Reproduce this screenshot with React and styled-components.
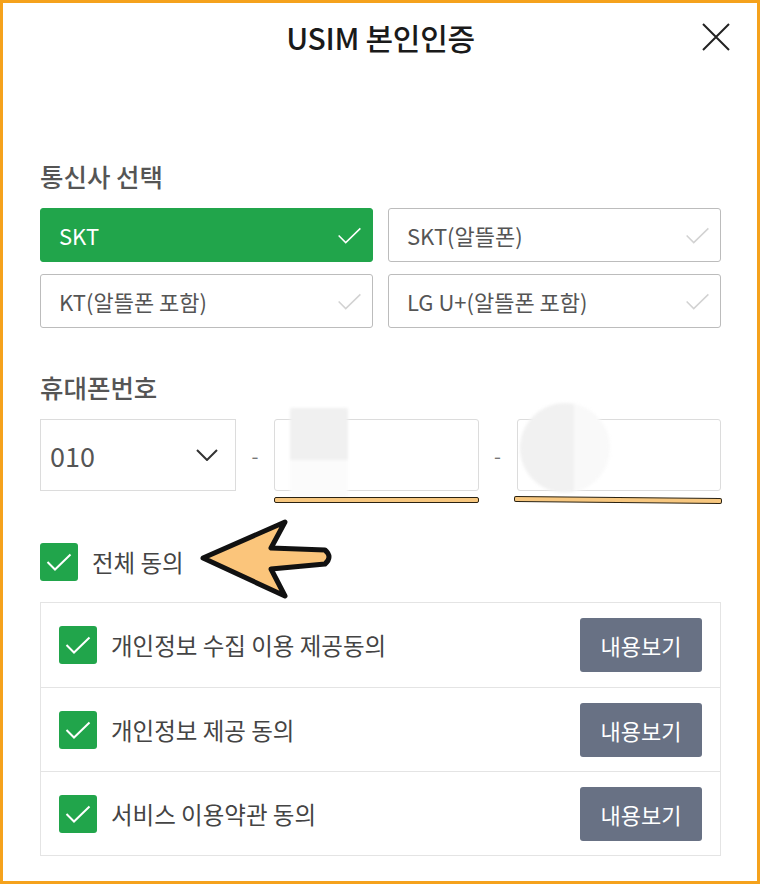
import React from 'react';
import styled, { createGlobalStyle } from 'styled-components';

const GlobalStyle = createGlobalStyle`
  * {
    box-sizing: border-box;
  }
  body {
    margin: 0;
    background: #fff;
    font-family: "Noto Sans CJK KR", "Noto Sans", sans-serif;
  }
`;

const Frame = styled.div`
  position: relative;
  width: 760px;
  height: 884px;
  border: 3px solid #f5a21c;
  background: #fff;
  padding: 0 36px 0 37px;
  overflow: hidden;
`;

const Header = styled.header`
  display: grid;
  grid-template-columns: 1fr auto 1fr;
  align-items: center;
  height: 68px;
  margin: 0 -10px;
`;

const Title = styled.h1`
  grid-column: 2;
  margin: 0;
  font-size: 30px;
  font-weight: 500;
  color: #1a1a1a;
  letter-spacing: -0.3px;
`;

const CloseButton = styled.button`
  justify-self: end;
  width: 30px;
  height: 30px;
  padding: 0;
  border: none;
  background: none;
  display: flex;
  align-items: center;
  justify-content: center;
`;

const Label = styled.h2`
  margin: ${p => p.$top}px 0 ${p => p.$bottom}px;
  font-size: 25.5px;
  line-height: 34px;
  font-weight: 500;
  color: #555;
`;

const CarrierGrid = styled.div`
  display: grid;
  grid-template-columns: 1fr 1fr;
  column-gap: 15px;
  row-gap: 12px;
`;

const Carrier = styled.button`
  height: 54px;
  display: flex;
  align-items: center;
  justify-content: space-between;
  padding: 0 10px 0 18px;
  border: 1px solid ${p => (p.$active ? '#21a54b' : '#bcbcbc')};
  border-radius: 3px;
  background: ${p => (p.$active ? '#21a54b' : '#fff')};
  color: ${p => (p.$active ? '#fff' : '#555')};
  font-family: inherit;
  font-size: 22px;
  text-align: left;
`;

const PhoneRow = styled.div`
  display: grid;
  grid-template-columns: 196px 38px 1fr 38px 1fr;
  height: 72px;
`;

const Select = styled.div`
  display: flex;
  align-items: center;
  justify-content: space-between;
  padding: 0 17px 0 9px;
  border: 1px solid #dcdcdc;
  font-size: 27px;
  color: #555;
`;

const Dash = styled.span`
  display: flex;
  align-items: center;
  justify-content: center;
  color: #777;
  font-size: 20px;
`;

const InputWrap = styled.div`
  position: relative;
`;

const Input = styled.input`
  width: 100%;
  height: 100%;
  border: 1px solid #dcdcdc;
  border-radius: 3px;
  background: transparent;
  outline: none;
`;

const Smudge = styled.div`
  position: absolute;
  pointer-events: none;
  background: ${p => p.$bg};
  border-radius: ${p => p.$radius};
  filter: blur(1.5px);
`;

const Marker = styled.div`
  position: absolute;
  left: ${p => p.$left}px;
  right: 0;
  bottom: -12px;
  height: 6px;
  background: #f7c77f;
  border: 1.5px solid #2a2212;
  border-radius: 2px;
  transform: rotate(${p => p.$tilt}deg);
`;

const AllAgree = styled.label`
  display: flex;
  align-items: center;
  gap: 14px;
  margin: 52px 0 21px;
  font-size: 23.5px;
  color: #444;
`;

const Box = styled.span`
  width: 38px;
  height: 38px;
  flex: none;
  border-radius: 3px;
  background: #21a54b;
  display: flex;
  align-items: center;
  justify-content: center;
`;

const TermsList = styled.ul`
  list-style: none;
  margin: 0;
  padding: 0;
  border: 1px solid #e4e4e4;
`;

const TermRow = styled.li`
  height: 84px;
  display: flex;
  align-items: center;
  gap: 14px;
  padding: 0 18px;
  border-top: ${p => (p.$first ? 'none' : '1px solid #e4e4e4')};
  font-size: 23.5px;
  color: #444;
`;

const TermText = styled.span`
  flex: 1;
`;

const ViewButton = styled.button`
  width: 122px;
  height: 54px;
  border: none;
  border-radius: 3px;
  background: #687184;
  color: #fff;
  font-family: inherit;
  font-size: 22px;
`;

const Arrow = styled.svg`
  position: absolute;
  left: 192px;
  top: 510px;
`;

const Check = ({ color, w = 26, h = 18, sw = 2 }) => (
  <svg width={w} height={h} viewBox="0 0 26 18" fill="none">
    <path d="M1.5 9 L9 16.5 L24.5 1.5" stroke={color} strokeWidth={sw} />
  </svg>
);

const carriers = [
  { name: 'SKT', active: true },
  { name: 'SKT(알뜰폰)' },
  { name: 'KT(알뜰폰 포함)' },
  { name: 'LG U+(알뜰폰 포함)' },
];

const terms = ['개인정보 수집 이용 제공동의', '개인정보 제공 동의', '서비스 이용약관 동의'];

export default function App() {
  return (
    <>
      <GlobalStyle />
      <Frame>
        <Header>
          <Title>USIM 본인인증</Title>
          <CloseButton aria-label="닫기">
            <svg width="28" height="28" viewBox="0 0 28 28">
              <path d="M1 1 L27 27 M27 1 L1 27" stroke="#222" strokeWidth="2" />
            </svg>
          </CloseButton>
        </Header>

        <Label $top={88} $bottom={15}>통신사 선택</Label>
        <CarrierGrid>
          {carriers.map(c => (
            <Carrier key={c.name} $active={c.active}>
              {c.name}
              <Check color={c.active ? '#fff' : '#d2d2d2'} w={25} h={17} sw={1.6} />
            </Carrier>
          ))}
        </CarrierGrid>

        <Label $top={42} $bottom={15}>휴대폰번호</Label>
        <PhoneRow>
          <Select>
            010
            <svg width="22" height="12" viewBox="0 0 22 12" fill="none">
              <path d="M1 1 L11 11 L21 1" stroke="#333" strokeWidth="2" />
            </svg>
          </Select>
          <Dash>-</Dash>
          <InputWrap>
            <Input />
            <Smudge $bg="linear-gradient(#f0f0f0 0 58%, #fbfbfb 58%)" $radius="2px"
              style={{ left: 16, top: -11, width: 58, height: 90 }} />
            <Marker $left={0} $tilt={0} />
          </InputWrap>
          <Dash>-</Dash>
          <InputWrap>
            <Input />
            <Smudge $bg="linear-gradient(90deg, #f1f1f1 0 60%, #f9f9f9 60%)" $radius="50%"
              style={{ left: 3, top: -16, width: 90, height: 90 }} />
            <Marker $left={-3} $tilt={0.5} />
          </InputWrap>
        </PhoneRow>

        <AllAgree>
          <Box><Check color="#fff" /></Box>
          전체 동의
        </AllAgree>

        <TermsList>
          {terms.map((t, i) => (
            <TermRow key={t} $first={i === 0}>
              <Box><Check color="#fff" /></Box>
              <TermText>{t}</TermText>
              <ViewButton>내용보기</ViewButton>
            </TermRow>
          ))}
        </TermsList>

        <Arrow width="145" height="92" viewBox="0 0 145 92">
          <path
            d="M8 45 L90 9 L76 35 L130 37 Q138 44 130 51 L76 56 L90 83 Z"
            fill="#fbc57b"
            stroke="#111"
            strokeWidth="5"
            strokeLinejoin="round"
          />
        </Arrow>
      </Frame>
    </>
  );
}
